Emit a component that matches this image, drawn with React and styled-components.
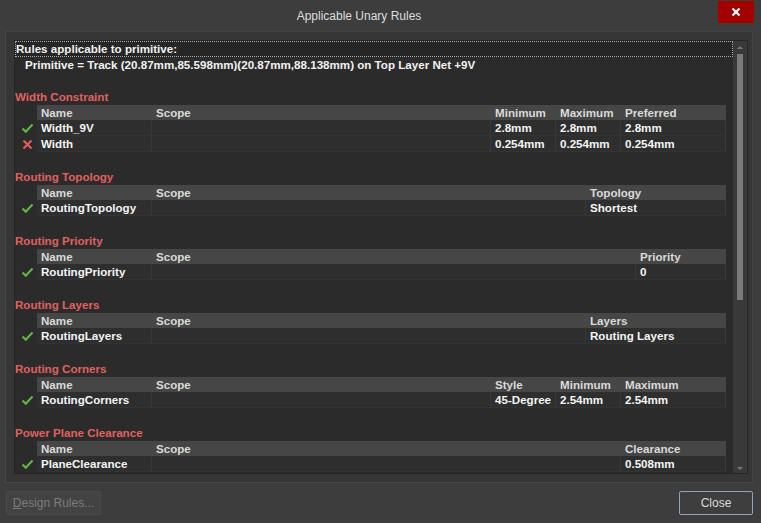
import styled, { createGlobalStyle } from "styled-components";

const sections = [
  {
    title: "Width Constraint",
    cols: [{ label: "Minimum", w: 65 }, { label: "Maximum", w: 65 }, { label: "Preferred", w: 105 }],
    rows: [
      { ok: true, name: "Width_9V", vals: ["2.8mm", "2.8mm", "2.8mm"] },
      { ok: false, name: "Width", vals: ["0.254mm", "0.254mm", "0.254mm"] },
    ],
  },
  {
    title: "Routing Topology",
    cols: [{ label: "Topology", w: 140 }],
    rows: [{ ok: true, name: "RoutingTopology", vals: ["Shortest"] }],
  },
  {
    title: "Routing Priority",
    cols: [{ label: "Priority", w: 90 }],
    rows: [{ ok: true, name: "RoutingPriority", vals: ["0"] }],
  },
  {
    title: "Routing Layers",
    cols: [{ label: "Layers", w: 140 }],
    rows: [{ ok: true, name: "RoutingLayers", vals: ["Routing Layers"] }],
  },
  {
    title: "Routing Corners",
    cols: [{ label: "Style", w: 65 }, { label: "Minimum", w: 65 }, { label: "Maximum", w: 105 }],
    rows: [{ ok: true, name: "RoutingCorners", vals: ["45-Degree", "2.54mm", "2.54mm"] }],
  },
  {
    title: "Power Plane Clearance",
    cols: [{ label: "Clearance", w: 105 }],
    rows: [{ ok: true, name: "PlaneClearance", vals: ["0.508mm"] }],
  },
];

const GlobalStyle = createGlobalStyle`
  html, body { margin: 0; padding: 0; background: #3c3c3c; }
  body { font-family: "Liberation Sans", Arial, sans-serif; }
`;

const Dialog = styled.div`
  width: 761px;
  height: 523px;
  background: #3d3d3d;
  display: flex;
  flex-direction: column;
  overflow: hidden;
`;

const TitleBar = styled.div`
  height: 31px;
  display: flex;
  align-items: flex-start;
  padding-right: 7px;
  color: #dedede;
  font-size: 12px;
  line-height: 33px;
`;

const Title = styled.div`
  flex: 1;
  text-align: center;
`;

const CloseX = styled.div`
  margin-top: 1px;
  width: 36px;
  height: 22px;
  background: #a30000;
  display: flex;
  align-items: center;
  justify-content: center;
`;

const Panel = styled.div`
  margin: 0 8px 0 5px;
  height: 452px;
  box-sizing: border-box;
  background: #363636;
  border: 1px solid #444;
  padding: 8px 4px 8px 8px;
  display: flex;
`;

const List = styled.div`
  flex: 1;
  display: flex;
  background: #2b2b2b;
  border: 1px solid #252525;
  overflow: hidden;
`;

const Content = styled.div`
  flex: 1;
  display: flex;
  flex-direction: column;
  font-weight: bold;
  font-size: 11.6px;
  color: #f2f2f2;
  overflow: hidden;
  & > * { flex-shrink: 0; }
`;

const Line = styled.div`
  height: 16px;
  line-height: 16px;
  padding-left: ${(p) => p.$indent || 1}px;
  white-space: nowrap;
  box-sizing: border-box;
  ${(p) => p.$focus && "outline: 1px dotted #aaa; outline-offset: -1px; background: #262626;"}
`;

const Heading = styled.div`
  height: 16px;
  line-height: 15px;
  color: #e06161;
`;

const Section = styled.div`
  margin-bottom: 17px;
`;

const Row = styled.div`
  display: grid;
  grid-template-columns: 22px 115px 1fr ${(p) => p.$cols};
  height: ${(p) => (p.$head ? 15 : 16)}px;
  margin-right: 7px;
`;

const IconCell = styled.div`
  display: flex;
  align-items: center;
  justify-content: center;
  padding-left: 3px;
`;

const Cell = styled.div`
  box-sizing: border-box;
  padding-left: 4px;
  white-space: nowrap;
  overflow: hidden;
  background: ${(p) => (p.$head ? "#464646" : "#2e2e2e")};
  color: ${(p) => (p.$head ? "#dadada" : "#f4f4f4")};
  line-height: ${(p) => (p.$head ? 16 : 15)}px;
  border-right: ${(p) => (p.$head ? "none" : "1px solid #383838")};
  border-bottom: ${(p) => (p.$head ? "none" : "1px solid #333")};
`;

const ScrollBar = styled.div`
  width: 14px;
  background: #393939;
  display: flex;
  flex-direction: column;
  align-items: center;
  padding-top: 2px;
`;

const Arrow = styled.div`
  width: 0;
  height: 0;
  border-left: 3px solid transparent;
  border-right: 3px solid transparent;
  ${(p) => (p.$down ? "border-top: 3px solid #777;" : "border-bottom: 3px solid #777;")}
  margin: 3px 0;
`;

const Thumb = styled.div`
  width: 6px;
  height: 246px;
  background: #7a7a7a;
  margin-top: 2px;
`;

const Track = styled.div`
  flex: 1;
`;

const Footer = styled.div`
  flex: 1;
  display: flex;
  align-items: flex-start;
  justify-content: space-between;
  padding: 7px 8px 0 6px;
`;

const Button = styled.div`
  height: 24px;
  box-sizing: border-box;
  display: flex;
  align-items: center;
  justify-content: center;
  font-size: 12px;
  width: ${(p) => p.$w}px;
  background: ${(p) => (p.$disabled ? "#434343" : "#3e3e3e")};
  border: 1px solid ${(p) => (p.$disabled ? "#4a4a4a" : "#8fa5bc")};
  color: ${(p) => (p.$disabled ? "#7c7c7c" : "#dcdcdc")};
  border-radius: 2px;
  margin-top: 1px;
`;

function Check() {
  return (
    <svg width="13" height="11" viewBox="0 0 13 11">
      <path d="M1.5 5.5 L4.8 8.7 L11.5 1.5" fill="none" stroke="#62b346" strokeWidth="2.2" />
    </svg>
  );
}

function Cross() {
  return (
    <svg width="11" height="11" viewBox="0 0 11 11">
      <path d="M1.5 1.5 L9.5 9.5 M9.5 1.5 L1.5 9.5" fill="none" stroke="#e25a5a" strokeWidth="2.2" />
    </svg>
  );
}

function RuleTable({ section }) {
  const cols = section.cols.map((c) => c.w + "px").join(" ");
  return (
    <Section>
      <Heading>{section.title}</Heading>
      <Row $head $cols={cols}>
        <IconCell />
        <Cell $head>Name</Cell>
        <Cell $head>Scope</Cell>
        {section.cols.map((c, i) => (
          <Cell $head key={i}>{c.label}</Cell>
        ))}
      </Row>
      {section.rows.map((r, i) => (
        <Row key={i} $cols={cols}>
          <IconCell>{r.ok ? <Check /> : <Cross />}</IconCell>
          <Cell>{r.name}</Cell>
          <Cell />
          {r.vals.map((v, j) => (
            <Cell key={j}>{v}</Cell>
          ))}
        </Row>
      ))}
    </Section>
  );
}

export default function App() {
  return (
    <Dialog>
      <GlobalStyle />
      <TitleBar>
        <Title>Applicable Unary Rules</Title>
        <CloseX>
          <svg width="10" height="10" viewBox="0 0 10 10">
            <path d="M1.5 1.5 L8.5 8.5 M8.5 1.5 L1.5 8.5" stroke="#fff" strokeWidth="2.2" />
          </svg>
        </CloseX>
      </TitleBar>
      <Panel>
        <List>
          <Content>
            <Line $focus>Rules applicable to primitive:</Line>
            <Line $indent={10}>Primitive = Track (20.87mm,85.598mm)(20.87mm,88.138mm) on Top Layer Net +9V</Line>
            <Line />
            {sections.map((s, i) => (
              <RuleTable key={i} section={s} />
            ))}
          </Content>
          <ScrollBar>
            <Arrow />
            <Thumb />
            <Track />
            <Arrow $down />
          </ScrollBar>
        </List>
      </Panel>
      <Footer>
        <Button $disabled $w={95}>
          <span><u>D</u>esign Rules...</span>
        </Button>
        <Button $w={74}>Close</Button>
      </Footer>
    </Dialog>
  );
}
